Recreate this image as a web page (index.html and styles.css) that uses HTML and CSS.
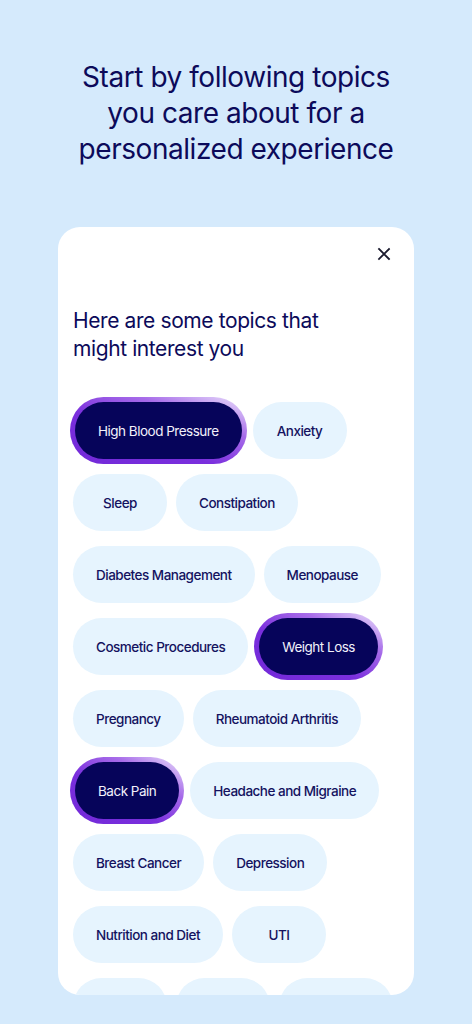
FILE: index.html
```html
<!DOCTYPE html>
<html lang="en">

<head>
    <meta charset="UTF-8">
    <title>Follow topics</title>
    <link rel="stylesheet" href="styles.css">
</head>

<body>
    <h1 class="intro">Start by following topics you care about for a personalized experience</h1>

    <div class="card">
        <div class="card-top">
            <button class="close" aria-label="Close">
                <svg width="14" height="14" viewBox="0 0 14 14">
                    <path d="M2 2 L12 12 M12 2 L2 12" stroke="#1b1b2f" stroke-width="1.8" stroke-linecap="square" />
                </svg>
            </button>
        </div>

        <h2 class="card-title">Here are some topics that might interest you</h2>

        <div class="topics">
            <span class="chip selected">High Blood Pressure</span>
            <span class="chip">Anxiety</span>
            <span class="chip">Sleep</span>
            <span class="chip">Constipation</span>
            <span class="chip">Diabetes Management</span>
            <span class="chip">Menopause</span>
            <span class="chip">Cosmetic Procedures</span>
            <span class="chip selected">Weight Loss</span>
            <span class="chip">Pregnancy</span>
            <span class="chip">Rheumatoid Arthritis</span>
            <span class="chip selected">Back Pain</span>
            <span class="chip">Headache and Migraine</span>
            <span class="chip">Breast Cancer</span>
            <span class="chip">Depression</span>
            <span class="chip">Nutrition and Diet</span>
            <span class="chip">UTI</span>
            <span class="chip">Eczema</span>
            <span class="chip">Asthma</span>
            <span class="chip">Skin Health</span>
        </div>
    </div>
</body>

</html>
```

FILE: styles.css
```css
body {
    font-family: Inter, 'Noto Sans', sans-serif;
    background: #d5eafc;
    color: #0c0a5a;
    margin: 0;
    width: 472px;
    height: 1024px;
    overflow: hidden;
}

.intro {
    font-size: 28px;
    font-weight: 400;
    line-height: 36px;
    letter-spacing: -0.45px;
    text-align: center;
    margin: 59px 70px 60px;
}

.card {
    background: #fff;
    border-radius: 22px;
    margin: 0 58px;
    height: 768px;
    overflow: hidden;
    padding: 18px 15px 0;
    box-sizing: border-box;
}

.card-top {
    display: flex;
    justify-content: flex-end;
    padding-right: 6px;
}

.close {
    width: 18px;
    height: 18px;
    padding: 0;
    border: 0;
    background: none;
    display: flex;
    align-items: center;
    justify-content: center;
}

.card-title {
    font-size: 21px;
    font-weight: 400;
    line-height: 28px;
    letter-spacing: -0.4px;
    margin: 44px 40px 39px 0;
}

.topics {
    display: flex;
    flex-wrap: wrap;
    gap: 15px 9px;
}

.chip {
    display: flex;
    align-items: center;
    justify-content: center;
    min-width: 94px;
    height: 57px;
    padding: 0 23px;
    border-radius: 999px;
    background: #e6f4fe;
    font-size: 13.5px;
    font-weight: 500;
    letter-spacing: -0.5px;
    color: #14125f;
    white-space: nowrap;
    box-sizing: border-box;
}

/* followed topics get a dark fill and a gradient ring */
.chip.selected {
    height: 67px;
    margin: -5px -3px;
    border: 5px solid transparent;
    background:
        linear-gradient(#06045a, #06045a) padding-box,
        linear-gradient(to bottom left, #ece3fc 0%, #a76ce9 30%, #7a2fdd 60%, #7229d8 100%) border-box;
    color: #f2f1fb;
    font-weight: 400;
}
```
